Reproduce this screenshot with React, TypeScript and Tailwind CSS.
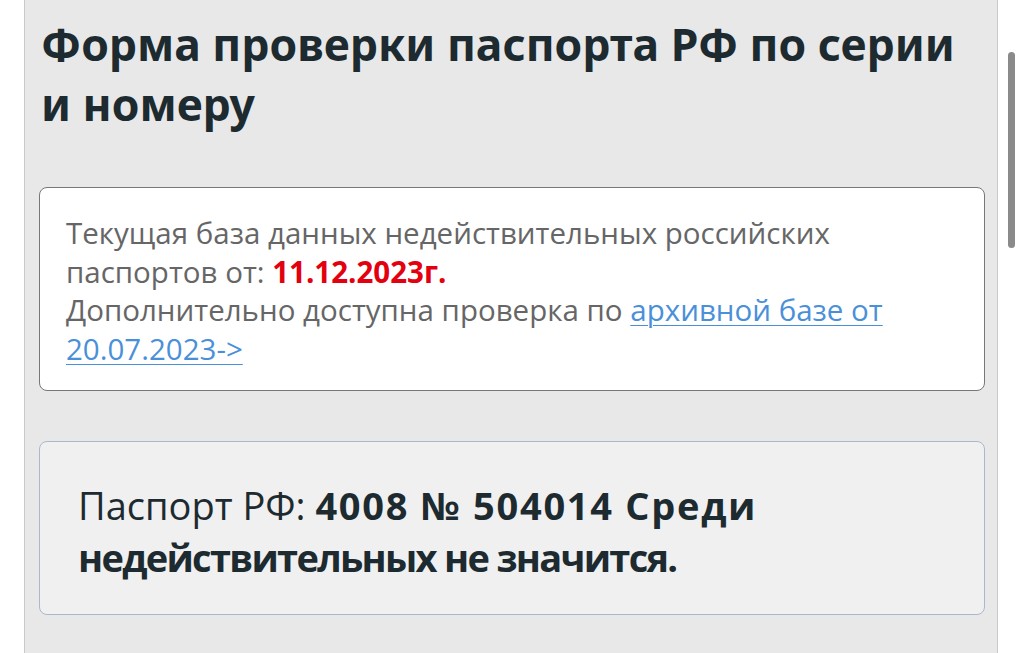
export default function App() {
  return (
    <div className="relative h-[653px] w-[1024px] overflow-hidden bg-white" style={{ fontFamily: '"Open Sans", "Noto Sans", sans-serif' }}>
      <div className="ml-[24px] h-full w-[974px] border-x border-[#c9c9c9] bg-[#e8e8e8] pl-[14px] pr-[12px] pt-[14px]">
        <h1 className="pl-[2px] text-[44.5px] font-bold leading-[60px] text-[#1d2b30]" style={{ fontFamily: '"Noto Sans", "Open Sans", sans-serif' }}>
          Форма проверки паспорта РФ по серии и номеру
        </h1>

        <div className="mt-[53px] rounded-[8px] border border-[#777] bg-white pb-[22px] pl-[26px] pr-[26px] pt-[26px] text-[29.5px] leading-[38.5px] text-[#666]">
          Текущая база данных недействительных российских паспортов от:{' '}
          <span className="font-bold text-[#e3000f]">11.12.2023г.</span>
          <br />
          Дополнительно доступна проверка по{' '}
          <a className="text-[#4a90d9] underline decoration-1 underline-offset-4">архивной базе от 20.07.2023-&gt;</a>
        </div>

        <div className="mt-[50px] rounded-[8px] border border-[#a9b9cb] bg-[#f0f0f0] pb-[31px] pl-[38px] pr-[38px] pt-[37px] text-[38px] leading-[52px] text-[#1d2b30]">
          Паспорт РФ: <span className="font-bold tracking-[0.045em]">4008 № 504014 Среди</span>{' '}
          <span className="font-bold tracking-[-0.045em]">недействительных не значится.</span>
        </div>
      </div>

      <div className="absolute left-[1008px] top-[52px] h-[196px] w-[7px] rounded-full bg-[#8a8a8a]" />
    </div>
  );
}
